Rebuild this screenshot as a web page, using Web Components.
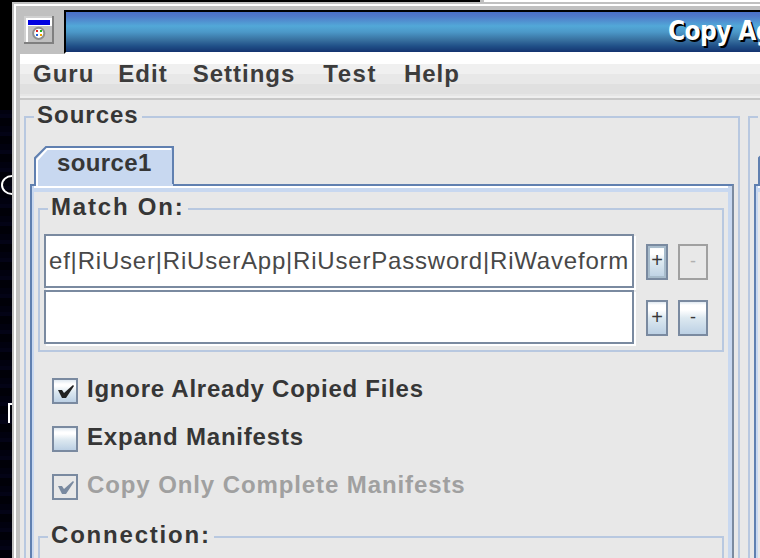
<!DOCTYPE html>
<html>
<head>
<meta charset="utf-8">
<title>Copy Agent</title>
<style>
    html, body { margin: 0; padding: 0; background: #000; }
</style>
</head>
<body>
<desk-top>
    <app-window heading="Copy Ag">
        <menu-bar slot="menu">
            <menu-item>Guru</menu-item>
            <menu-item style="margin-left:-2px">Edit</menu-item>
            <menu-item style="margin-left:-1px">Settings</menu-item>
            <menu-item style="margin-left:2px;letter-spacing:1.5px">Test</menu-item>
            <menu-item style="margin-left:1px">Help</menu-item>
        </menu-bar>

        <group-box label="Sources" class="sources">
            <tab-pane label="source1">
                <group-box label="Match On:" style="letter-spacing:1.8px">
                    <pattern-row active>ef|RiUser|RiUserApp|RiUserPassword|RiWaveform</pattern-row>
                    <pattern-row></pattern-row>
                </group-box>
                <div style="display:flex;flex-direction:column;margin:15px 0 12px 18px">
                    <check-row checked style="letter-spacing:.75px">Ignore Already Copied Files</check-row>
                    <check-row style="letter-spacing:.8px">Expand Manifests</check-row>
                    <check-row checked disabled style="letter-spacing:.9px">Copy Only Complete Manifests</check-row>
                </div>
                <group-box label="Connection:" style="letter-spacing:1.8px">
                    <div style="height:80px"></div>
                </group-box>
            </tab-pane>
        </group-box>

        <!-- second column, nearly all of it is outside the window -->
        <group-box label="" class="targets">
            <tab-pane label=""><div style="height:500px"></div></tab-pane>
        </group-box>
    </app-window>
</desk-top>

<script>
const C_LINE = '#b8c8e0';      // group outlines
const C_TAB = '#c8d8f0';       // selected tab fill
const C_BLUE = '#6080b0';      // tab pane outline
const C_GRAY = '#7a8aa0';      // control outline

class DeskTop extends HTMLElement {
    constructor() {
        super();
        this.attachShadow({ mode: 'open' });
    }

    connectedCallback() {
        this.shadowRoot.innerHTML = `
            <style>
                :host {
                    display: block;
                    position: relative;
                    width: 760px;
                    height: 558px;
                    overflow: hidden;
                    background:
                        repeating-linear-gradient(#01010f 0 6px, #030316 6px 10px, #000008 10px 18px);
                    font-family: "Liberation Sans", Arial, sans-serif;
                }
                .strip {
                    height: 2px;
                    background: linear-gradient(90deg, #000 480px, #c0c0c0 480px, #c0c0c0 484px, #fff 484px);
                }
                .blackout {
                    position: absolute;
                    left: 0;
                    top: 0;
                    width: 12px;
                    height: 110px;
                    background: #000;
                }
                /* bits of the wallpaper that show next to the window */
                .ring {
                    position: absolute;
                    left: 1px;
                    top: 175px;
                    width: 18px;
                    height: 16px;
                    border: 2px solid #fff;
                    border-radius: 50%;
                }
                .stem {
                    position: absolute;
                    left: 8px;
                    top: 403px;
                    width: 2px;
                    height: 20px;
                    background: #fff;
                }
                .stem::after {
                    content: '';
                    position: absolute;
                    left: 2px;
                    top: 0;
                    width: 2px;
                    height: 2px;
                    background: #fff;
                }
                .stage {
                    position: relative;
                    padding-left: 12px;
                }
            </style>
            <div class="blackout"></div>
            <div class="ring"></div>
            <div class="stem"></div>
            <div class="strip"></div>
            <div class="stage"><slot></slot></div>
        `;
    }
}

class AppWindow extends HTMLElement {
    constructor() {
        super();
        this.attachShadow({ mode: 'open' });
    }

    connectedCallback() {
        this.shadowRoot.innerHTML = `
            <style>
                :host {
                    display: block;
                    width: 860px;
                    box-sizing: border-box;
                    border: 2px solid #c0c0c0;
                    background: #c0c0c0;
                }
                .frame {
                    border-top: 2px solid #fff;
                    border-left: 2px solid #fff;
                    padding: 4px 0 0 4px;
                }
                .titlebar {
                    display: flex;
                    height: 44px;
                }
                .sysmenu {
                    flex: none;
                    width: 44px;
                    padding: 6px 0 0 4px;
                    box-sizing: border-box;
                }
                .sysmenu svg { display: block; }
                .title {
                    flex: 1;
                    box-sizing: border-box;
                    border-top: 2px solid #000;
                    border-left: 2px solid #000;
                    border-bottom: 2px solid #fff;
                    padding-left: 602px;
                    background: linear-gradient(#4a70c8 0, #4f78c8 4px, #52a8d8 14px, #4c98c8 20px, #38709f 28px, #205088 34px, #143470 40px, #0a1a60 42px);
                    color: #fff;
                    font: bold 26px/38px "DejaVu Sans Condensed", "DejaVu Sans", sans-serif;
                    font-stretch: condensed;
                    letter-spacing: -.6px;
                    text-shadow: 2px 2px 0 #000;
                    white-space: nowrap;
                    overflow: hidden;
                }
                .body {
                    background: #e8e8e8;
                    display: flex;
                    gap: 8px;
                    padding: 3px 0 0 4px;
                }
            </style>
            <div class="frame">
                <div class="titlebar">
                    <div class="sysmenu">
                        <svg width="30" height="28" viewBox="0 0 30 28">
                            <rect width="30" height="28" fill="#808080"/>
                            <rect width="28" height="26" fill="#d0d0d0"/>
                            <rect x="2" y="2" width="26" height="24" fill="#fff"/>
                            <rect x="4" y="4" width="24" height="22" fill="#c0c0c0"/>
                            <rect x="4" y="4" width="22" height="5" fill="#0000e0"/>
                            <rect x="2" y="2" width="26" height="2" fill="#fff"/>
                            <rect x="26" y="4" width="2" height="6" fill="#fff"/>
                            <rect x="4" y="9" width="22" height="1" fill="#fff"/>
                            <circle cx="14.7" cy="17.3" r="5.6" fill="#fff" stroke="#909090" stroke-width="2"/>
                            <rect x="12" y="14" width="2" height="2" fill="#e02020"/>
                            <rect x="16" y="14" width="2" height="2" fill="#20b020"/>
                            <rect x="12" y="18" width="2" height="2" fill="#2060e0"/>
                            <rect x="16" y="18" width="2" height="2" fill="#f0a000"/>
                        </svg>
                    </div>
                    <div class="title">${this.getAttribute('heading') || ''}</div>
                </div>
                <slot name="menu"></slot>
                <div class="body"><slot></slot></div>
            </div>
        `;
    }
}

class MenuBar extends HTMLElement {
    constructor() {
        super();
        this.attachShadow({ mode: 'open' });
    }

    connectedCallback() {
        this.shadowRoot.innerHTML = `
            <style>
                :host {
                    display: flex;
                    height: 46px;
                    box-sizing: border-box;
                    padding: 6px 0 0 0;
                    background: linear-gradient(#fff 0 10px, #f0f0f0 10px 20px, #e8e8e8 20px 30px, #e0e0e0 30px 40px, #e6e6e6 40px 42px, #eee 42px 44px, #c8c8c8 44px 46px);
                }
            </style>
            <slot></slot>
        `;
    }
}

class MenuItem extends HTMLElement {
    constructor() {
        super();
        this.attachShadow({ mode: 'open' });
    }

    connectedCallback() {
        this.shadowRoot.innerHTML = `
            <style>
                :host {
                    display: block;
                    padding: 0 13px;
                    color: #3c3c3c;
                    font: bold 24px/28px "Liberation Sans", Arial, sans-serif;
                    letter-spacing: 1px;
                }
            </style>
            <slot></slot>
        `;
    }
}

// titled border, the <legend> gives the gap in the top line
class GroupBox extends HTMLElement {
    constructor() {
        super();
        this.attachShadow({ mode: 'open' });
    }

    connectedCallback() {
        const label = this.getAttribute('label') || '';
        const isSources = this.classList.contains('sources');
        const isTargets = this.classList.contains('targets');
        const top = (isSources || isTargets) ? 15 : 11;
        this.shadowRoot.innerHTML = `
            <style>
                :host {
                    display: block;
                    margin: 0 4px;
                    letter-spacing: 1px;
                    ${isSources ? 'margin: 0; flex: none; width: 716px;' : ''}
                    ${isTargets ? 'margin: 0; flex: none; width: 200px;' : ''}
                }
                fieldset {
                    margin: 0;
                    padding: ${top}px 4px 4px 4px;
                    border: 2px solid ${C_LINE};
                    min-width: 0;
                }
                legend {
                    margin-left: 4px;
                    padding: 0 3px 4px;
                    min-height: 24px;
                    ${label ? '' : 'width: 60px; box-sizing: content-box;'}
                    color: #363636;
                    font: bold 24px/24px "Liberation Sans", Arial, sans-serif;
                    white-space: nowrap;
                }
                ::slotted(*) { letter-spacing: normal; }
            </style>
            <fieldset>
                <legend>${label}</legend>
                <slot></slot>
            </fieldset>
        `;
    }
}

class TabPane extends HTMLElement {
    constructor() {
        super();
        this.attachShadow({ mode: 'open' });
    }

    connectedCallback() {
        const label = this.getAttribute('label') || '';
        this.shadowRoot.innerHTML = `
            <style>
                :host { display: block; }
                .tab {
                    position: relative;
                    z-index: 1;
                    width: 140px;
                    height: 40px;
                    margin: 0 0 -2px 4px;
                    box-sizing: border-box;
                    padding: 0 0 0 23px;
                    color: #363636;
                    font: bold 24px/34px "Liberation Sans", Arial, sans-serif;
                    letter-spacing: .4px;
                    white-space: nowrap;
                }
                .tab svg {
                    position: absolute;
                    left: 0;
                    top: 0;
                    z-index: -1;
                }
                .pane {
                    border: 2px solid ${C_BLUE};
                    border-right-color: ${C_GRAY};
                    border-bottom: 0;
                    background: #c8d8f0;
                }
                .inner {
                    border-top: 2px solid #fff;
                    margin: 0 4px 0 2px;
                    padding: 7px 0 0 0;
                    background: linear-gradient(${C_TAB} 4px, #e8e8e8 4px);
                }
            </style>
            <div class="tab">
                <svg width="140" height="40" viewBox="0 0 140 40">
                    <path d="M1 40 V13 L12 1 H139 V40 Z" fill="${C_TAB}"/>
                    <path d="M3 40 V14 L13 3 H137" fill="none" stroke="#fff" stroke-width="2"/>
                    <path d="M1 40 V12 L12 1 H139 V38" fill="none" stroke="${C_BLUE}" stroke-width="2"/>
                </svg>
                ${label}
            </div>
            <div class="pane">
                <div class="inner"><slot></slot></div>
            </div>
        `;
    }
}

class PatternRow extends HTMLElement {
    constructor() {
        super();
        this.attachShadow({ mode: 'open' });
    }

    connectedCallback() {
        const active = this.hasAttribute('active');
        this.shadowRoot.innerHTML = `
            <style>
                :host {
                    display: flex;
                    align-items: center;
                    height: 56px;
                    padding-right: 14px;
                }
                .field {
                    flex: none;
                    width: 590px;
                    height: 54px;
                    margin: 0 12px 2px 0;
                    box-sizing: border-box;
                    border: 2px solid ${C_GRAY};
                    box-shadow: 2px 2px 0 #fff;
                    background: #fff;
                    padding: 0 3px;
                    color: #484848;
                    font: 24px/50px "Liberation Sans", Arial, sans-serif;
                    letter-spacing: .8px;
                    white-space: nowrap;
                    overflow: hidden;
                }
            </style>
            <div class="field"><slot></slot></div>
            <small-button width="22" ${active ? 'focused' : ''}>+</small-button>
            <small-button width="30" style="margin-left:10px" ${active ? 'disabled' : ''}>-</small-button>
        `;
    }
}

class SmallButton extends HTMLElement {
    constructor() {
        super();
        this.attachShadow({ mode: 'open' });
    }

    connectedCallback() {
        const off = this.hasAttribute('disabled');
        const focused = this.hasAttribute('focused');
        const plus = this.textContent.trim() === '+';
        this.shadowRoot.innerHTML = `
            <style>
                :host {
                    display: block;
                    flex: none;
                    width: ${this.getAttribute('width')}px;
                    height: 36px;
                    box-sizing: border-box;
                    border: 2px solid ${off ? '#a0a0a0' : C_GRAY};
                    background: ${off ? 'transparent' : 'linear-gradient(#dfe8f0 0, #fff 3px, #fff 8px, #dce8f0 16px, #bcd0e4 100%)'};
                    color: ${off ? '#b0b0b0' : '#383838'};
                    font: ${plus ? '20px' : '18px'}/28px "Liberation Sans", Arial, sans-serif;
                    text-align: center;
                }
                .ring {
                    height: 100%;
                    box-sizing: border-box;
                    ${focused ? 'border: 2px solid #a8bccc; line-height: 24px;' : 'padding-top: 1px;'}
                }
            </style>
            <div class="ring"><slot></slot></div>
        `;
    }
}

class CheckRow extends HTMLElement {
    constructor() {
        super();
        this.attachShadow({ mode: 'open' });
    }

    connectedCallback() {
        const off = this.hasAttribute('disabled');
        const on = this.hasAttribute('checked');
        const mark = on
            ? `<path d="M4 10 H8 L10 13 L19 5 L20 6 L12 18 H8 Z" fill="${off ? C_GRAY : '#222'}"/>`
            : '';
        this.shadowRoot.innerHTML = `
            <style>
                :host {
                    display: flex;
                    align-items: center;
                    gap: 9px;
                    height: 48px;
                    color: ${off ? '#a0a0a0' : '#363636'};
                    font: bold 24px/28px "Liberation Sans", Arial, sans-serif;
                }
                .box {
                    flex: none;
                    width: 26px;
                    height: 26px;
                    box-sizing: border-box;
                    border: 2px solid ${C_GRAY};
                    background: ${off ? 'transparent' : 'linear-gradient(#dfe8f0 0, #fff 4px, #fff 6px, #dce8f0 12px, #bcd0e4 100%)'};
                }
                .box svg { display: block; }
                .text { padding-bottom: 4px; }
            </style>
            <div class="box">
                <svg width="22" height="22" viewBox="0 0 22 22">${mark}</svg>
            </div>
            <div class="text"><slot></slot></div>
        `;
    }
}

customElements.define('desk-top', DeskTop);
customElements.define('app-window', AppWindow);
customElements.define('menu-bar', MenuBar);
customElements.define('menu-item', MenuItem);
customElements.define('group-box', GroupBox);
customElements.define('tab-pane', TabPane);
customElements.define('pattern-row', PatternRow);
customElements.define('small-button', SmallButton);
customElements.define('check-row', CheckRow);
</script>
</body>
</html>
